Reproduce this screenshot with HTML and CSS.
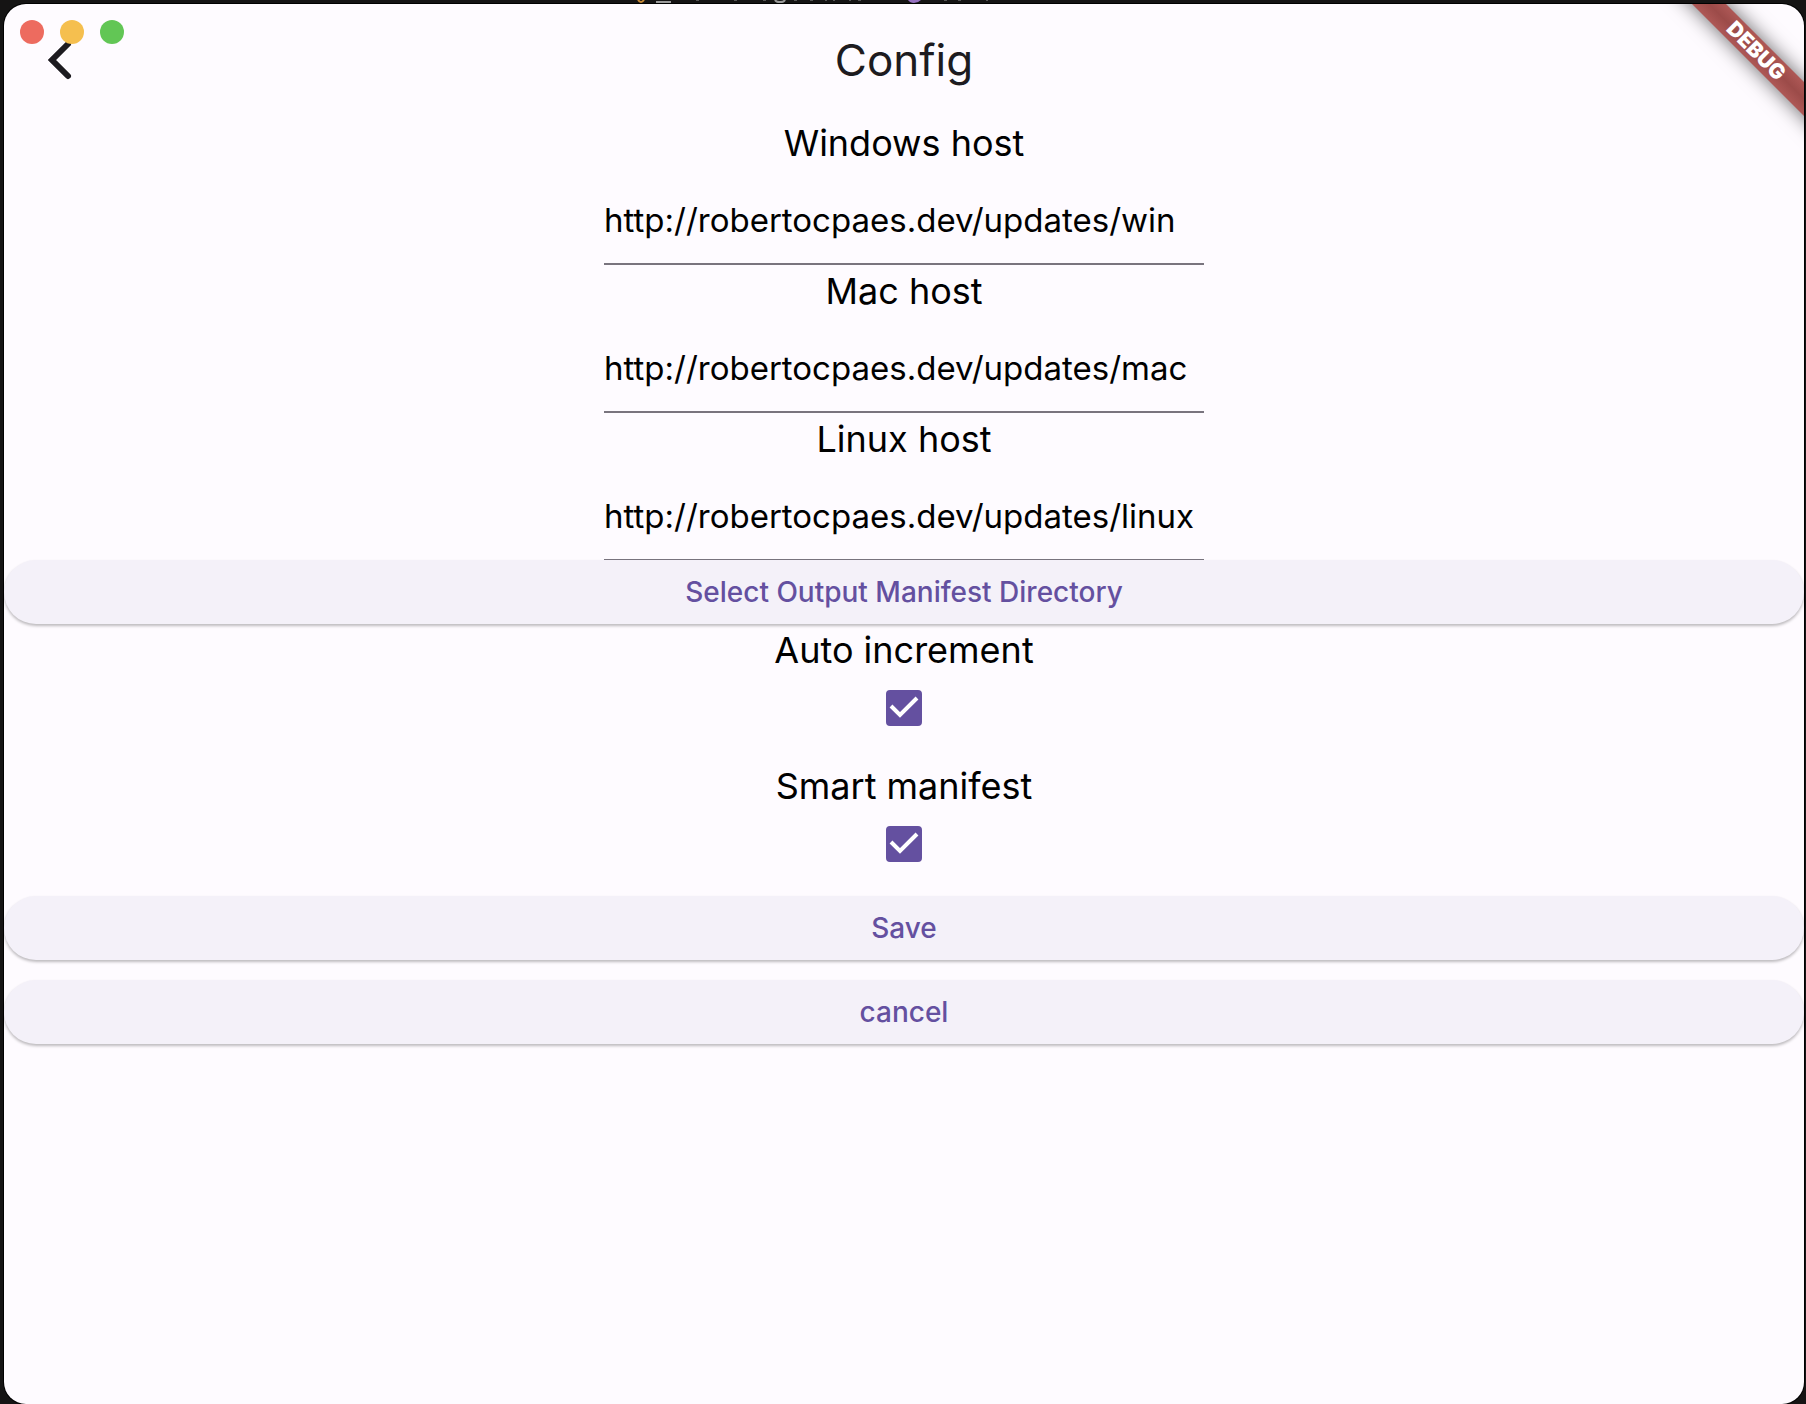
FILE: index.html
```html
<!DOCTYPE html>
<html lang="en">
<head>
<meta charset="utf-8">
<meta name="viewport" content="width=device-width, initial-scale=1">
<title>Config</title>
<link rel="stylesheet" href="styles.css">
</head>
<body>
<svg class="backdrop" width="1040" height="3" viewBox="0 0 1040 3" aria-hidden="true">
  <path d="M638 0q3 4 6 0" fill="none" stroke="#c98a35" stroke-width="2"/>
  <path d="M656 1h15v2h-15z" fill="#9a9a9a"/>
  <path d="M775 0q1 2 5 2t5-2" fill="none" stroke="#9a9a9a" stroke-width="2"/>
  <path d="M908 0h13q-3 3-7 3t-6-3z" fill="#9670c0"/>
  <path d="M696 0h3M734 0h3M763 0h3M794 0h3M810 0h3M825 0h2M833 0h2M849 0h2M858 0h3M944 0h3M958 0h3M986 0h2" stroke="#555" stroke-width="2"/>
</svg>
<div class="window">
  <div class="window-controls" aria-hidden="true">
    <span class="dot dot-close"></span>
    <span class="dot dot-minimize"></span>
    <span class="dot dot-zoom"></span>
  </div>
  <div class="banner">DEBUG</div>

  <header class="app-bar">
    <button class="back" type="button" aria-label="Back">
      <svg width="48" height="48" viewBox="0 0 48 48" aria-hidden="true">
        <path d="M32 8L16 24L32 40" fill="none" stroke="#1d1b20" stroke-width="6" stroke-linecap="round" stroke-linejoin="miter"/>
      </svg>
    </button>
    <h1 class="title">Config</h1>
  </header>

  <form class="form">
    <label class="label" for="windows-host">Windows host</label>
    <input class="field" id="windows-host" type="text" value="http://robertocpaes.dev/updates/win">
    <label class="label" for="mac-host">Mac host</label>
    <input class="field" id="mac-host" type="text" value="http://robertocpaes.dev/updates/mac">
    <label class="label" for="linux-host">Linux host</label>
    <input class="field" id="linux-host" type="text" value="http://robertocpaes.dev/updates/linux">

    <button class="button button-directory" type="button">Select Output Manifest Directory</button>

    <div class="option">
      <label class="label" for="auto-increment">Auto increment</label>
      <span class="check">
        <input class="check-box" id="auto-increment" type="checkbox" checked>
        <svg class="check-mark" width="36" height="36" viewBox="0 0 36 36" aria-hidden="true"><path d="M5 16L14 25L31 8" fill="none" stroke="#fff" stroke-width="4"/></svg>
      </span>
    </div>
    <div class="option">
      <label class="label" for="smart-manifest">Smart manifest</label>
      <span class="check">
        <input class="check-box" id="smart-manifest" type="checkbox" checked>
        <svg class="check-mark" width="36" height="36" viewBox="0 0 36 36" aria-hidden="true"><path d="M5 16L14 25L31 8" fill="none" stroke="#fff" stroke-width="4"/></svg>
      </span>
    </div>

    <div class="actions">
      <button class="button" type="button">Save</button>
      <button class="button" type="button">cancel</button>
    </div>
  </form>
</div>
</body>
</html>
```
FILE: styles.css
```css
* {
  box-sizing: border-box;
}

body {
  margin: 0;
  padding: 4px 2px 0 4px;
  background: #151414;
  font-family: Inter, "Liberation Sans", sans-serif;
}

.backdrop {
  position: absolute;
  top: 0;
  left: 0;
}

.window {
  position: relative;
  min-height: calc(100vh - 4px);
  border-radius: 22px;
  background: #fefbff;
  box-shadow: 0 0 0 1px #000;
  overflow: hidden;
}

.window-controls {
  position: absolute;
  z-index: 1;
  top: 16px;
  left: 16px;
  display: flex;
  gap: 16px;
}

.dot {
  width: 24px;
  height: 24px;
  border-radius: 50%;
}

.dot-close {
  background: #ed6b5f;
}

.dot-minimize {
  background: #f5bf4f;
}

.dot-zoom {
  background: #62c655;
}

.banner {
  position: absolute;
  z-index: 1;
  top: 35px;
  right: -102px;
  width: 300px;
  height: 24px;
  transform: rotate(45deg);
  background: linear-gradient(#ae5856, #9c4b49 50%, #ae5856);
  box-shadow: 0 0 20px rgba(0, 0, 0, 0.6);
  color: #fff;
  font-size: 21px;
  font-weight: 900;
  line-height: 24px;
  text-align: center;
}

.app-bar {
  display: grid;
  grid-template-columns: 112px 1fr 112px;
  align-items: center;
  height: 113px;
  padding-bottom: 2px;
}

.back {
  display: flex;
  justify-content: center;
  padding: 0;
  border: 0;
  background: none;
}

.title {
  margin: 0;
  color: #1d1b20;
  font-size: 44px;
  font-weight: 400;
  line-height: 56px;
  text-align: center;
}

.form {
  display: flex;
  flex-direction: column;
  align-items: center;
}

.label {
  color: #000;
  font-size: 36px;
  line-height: 52px;
}

.field {
  width: 600px;
  max-width: 100%;
  height: 96px;
  padding: 8px 0 0;
  border: 0;
  border-bottom: 2px solid #79747e;
  border-radius: 0;
  outline: 0;
  background: none;
  color: #000;
  font-family: inherit;
  font-size: 33px;
}

.button {
  width: 100%;
  height: 64px;
  padding: 0 32px;
  border: 0;
  border-radius: 32px;
  background: #f4f1f9;
  box-shadow: 0 2px 3px rgba(0, 0, 0, 0.26);
  color: #6450a0;
  font-family: inherit;
  font-size: 28px;
  font-weight: 500;
}

.button-directory {
  position: relative;
  margin-top: -1px;
}

.option {
  display: flex;
  flex-direction: column;
  align-items: center;
  margin-bottom: 20px;
}

.check {
  display: grid;
  place-items: center;
  height: 64px;
}

.check-box,
.check-mark {
  grid-area: 1 / 1;
}

.check-box {
  width: 36px;
  height: 36px;
  margin: 0;
  appearance: none;
  border: 4px solid #6450a0;
  border-radius: 4px;
}

.check-box:checked {
  background: #6450a0;
}

.check-mark {
  visibility: hidden;
  pointer-events: none;
}

.check-box:checked + .check-mark {
  visibility: visible;
}

.actions {
  display: flex;
  flex-direction: column;
  gap: 20px;
  width: 100%;
}
```
